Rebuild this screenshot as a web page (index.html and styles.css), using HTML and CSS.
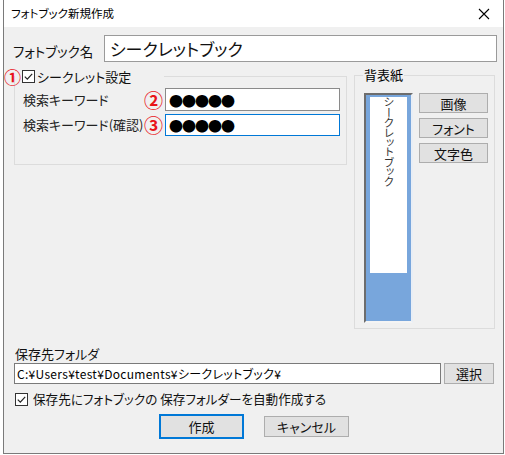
FILE: index.html
```html
<!DOCTYPE html>
<html lang="ja">
<head>
<meta charset="utf-8">
<link rel="stylesheet" href="styles.css">
</head>
<body>
<div class="window">
  <div class="titlebar">
    <span class="title">フォトブック新規作成</span>
    <svg class="close" width="12" height="12" viewBox="0 0 12 12"><path d="M1 1L11 11M11 1L1 11" stroke="#000" stroke-width="1.1" fill="none"/></svg>
  </div>
  <div class="content">
    <div class="name-row">
      <span class="name-label">フォトブック名</span>
      <div class="textbox name-box">シークレットブック</div>
    </div>
    <div class="middle">
      <fieldset class="group secret">
        <legend class="secret-legend">
          <span class="num num1">①</span>
          <svg class="check" width="13" height="13" viewBox="0 0 13 13"><rect x="0.5" y="0.5" width="12" height="12" fill="#fff" stroke="#333"/><path d="M2.8 6.6L5.3 9.1L10.2 3.8" stroke="#222" stroke-width="1.2" fill="none"/></svg>
          <span class="secret-text">シークレット設定</span>
        </legend>
        <div class="kw-row first">
          <span class="kw-label">検索キーワード</span>
          <span class="num num2">②</span>
          <div class="textbox pw">●●●●●</div>
        </div>
        <div class="kw-row">
          <span class="kw-label">検索キーワード(確認)</span>
          <span class="num num2">③</span>
          <div class="textbox pw focus">●●●●●</div>
        </div>
      </fieldset>
      <fieldset class="group paper">
        <legend class="paper-legend">背表紙</legend>
        <div class="paper-body">
          <div class="preview">
            <div class="card"><span class="vtext">シークレットブック</span></div>
          </div>
          <div class="paper-buttons">
            <div class="btn small">画像</div>
            <div class="btn small">フォント</div>
            <div class="btn small">文字色</div>
          </div>
        </div>
      </fieldset>
    </div>
    <div class="folder-label">保存先フォルダ</div>
    <div class="folder-row">
      <div class="textbox path">C:¥Users¥test¥Documents¥シークレットブック¥</div>
      <div class="btn select">選択</div>
    </div>
    <div class="auto-row">
      <svg class="check" width="13" height="13" viewBox="0 0 13 13"><rect x="0.5" y="0.5" width="12" height="12" fill="#fff" stroke="#333"/><path d="M2.8 6.6L5.3 9.1L10.2 3.8" stroke="#222" stroke-width="1.2" fill="none"/></svg>
      <span class="auto-text">保存先にフォトブックの 保存フォルダーを自動作成する</span>
    </div>
    <div class="actions">
      <div class="btn primary">作成</div>
      <div class="btn cancel">キャンセル</div>
    </div>
  </div>
</div>
</body>
</html>
```
FILE: styles.css
```css
* { box-sizing: border-box; }
html, body { margin: 0; padding: 0; background: #fff; }
body {
  font-family: "Noto Sans CJK JP", "Noto Sans", sans-serif;
  font-size: 13px;
  color: #000;
  font-feature-settings: "palt";
}
.window {
  margin-left: 3px;
  width: 501px;
  height: 454px;
  border: 1px solid #7a7a7a;
  border-top: none;
  background: #f0f0f0;
  display: flex;
  flex-direction: column;
}
.titlebar {
  height: 27px;
  background: #fff;
  display: flex;
  align-items: center;
  justify-content: space-between;
  padding: 0 13px 0 7px;
}
.title { font-size: 11.5px; line-height: 1; }
.close { display: block; }
.content {
  padding: 8px 6px 0 10px;
  display: flex;
  flex-direction: column;
}
.name-row {
  display: flex;
  align-items: center;
  margin-left: -1px;
}
.name-label {
  width: 91px;
  font-size: 13.5px;
  padding-top: 5px;
  color: #111;
}
.textbox {
  background: #fff;
  border: 1px solid #7a7a7a;
  line-height: 1;
  display: flex;
  align-items: center;
  white-space: nowrap;
}
.name-box {
  flex: 1;
  height: 27px;
  font-size: 17px;
  padding-left: 5px;
  border-color: #9a9a9a;
  color: #111;
}
.middle {
  display: flex;
  gap: 7px;
  margin-top: 6px;
  align-items: flex-start;
  padding-right: 2px;
}
.group {
  margin: 0;
  padding: 0;
  border: 1px solid #dcdcdc;
  min-width: 0;
}
.secret { width: 333px; height: 97px; }
.secret-legend {
  padding: 0;
  width: 149px;
  display: flex;
  align-items: center;
  height: 16px;
}
.num {
  color: #e8141a;
  line-height: 1;
}
.num1 { font-size: 17px; margin-left: -11px; width: 18px; font-weight: bold; }
.secret-text { margin-left: 2px; font-size: 13px; line-height: 1; color: #111; }
.kw-row {
  display: flex;
  align-items: center;
  margin-top: 2px;
  padding-left: 8px;
  height: 23px;
}
.kw-row.first { margin-top: 4px; }
.kw-label { width: 121px; font-size: 13px; color: #222; line-height: 1; }
.num2 { font-size: 19px; width: 21px; font-weight: bold; }
.pw {
  width: 175px;
  height: 23px;
  font-size: 14px;
  padding-left: 3px;
  letter-spacing: -1px;
  border-color: #8a8a8a;
}
.pw.focus { border-color: #0078d7; height: 22px; }
.paper { width: 141px; height: 261px; }
.paper-legend {
  margin-left: 8px;
  padding: 0 1px;
  font-size: 13px;
  line-height: 14px;
}
.paper-body {
  display: flex;
  gap: 6px;
  padding: 11px 0 0 9px;
}
.preview {
  width: 49px;
  height: 230px;
  background: #78a6dc;
  border: 2px solid;
  border-color: #6d6d6d #e8eef6 #f4f4f4 #6d6d6d;
  padding: 2px 4px 0 4px;
}
.card {
  background: #fff;
  height: 176px;
  display: flex;
  justify-content: center;
}
.vtext {
  writing-mode: vertical-rl;
  font-size: 11px;
  color: #333;
  line-height: 1;
  font-feature-settings: "vpal";
}
.paper-buttons {
  display: flex;
  flex-direction: column;
  gap: 5px;
}
.btn {
  background: #e1e1e1;
  border: 1px solid #adadad;
  display: flex;
  align-items: center;
  justify-content: center;
  line-height: 1;
  color: #111;
}
.btn.small { width: 69px; height: 20px; font-size: 13px; }
.folder-label { margin-top: 17px; font-size: 13px; line-height: 15px; margin-left: 1px; color: #111; }
.folder-row {
  display: flex;
  gap: 3px;
  margin-top: 2px;
}
.path {
  width: 427px;
  height: 21px;
  font-size: 12px;
  padding-left: 2px;
  letter-spacing: 0.3px;
}
.btn.select { width: 50px; height: 21px; font-size: 13px; }
.auto-row {
  display: flex;
  align-items: center;
  gap: 5px;
  margin-top: 8px;
  margin-left: 1px;
}
.auto-text { font-size: 12.6px; line-height: 14px; color: #111; }
.actions {
  display: flex;
  gap: 20px;
  margin-top: 8px;
  margin-left: 145px;
  align-items: center;
}
.btn.primary { width: 85px; height: 25px; border: 2px solid #0078d7; font-size: 13px; }
.btn.cancel { width: 85px; height: 21px; font-size: 13px; }
```
